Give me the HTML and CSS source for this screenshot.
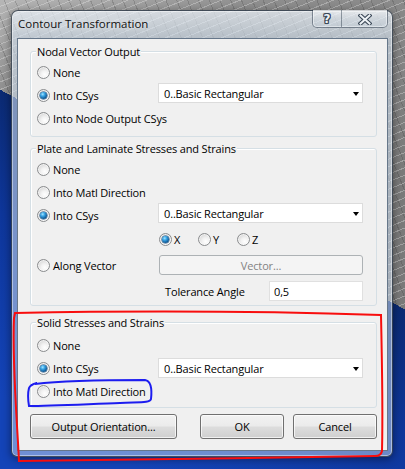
FILE: index.html
```html
<!DOCTYPE html>
<html>
<head>
<meta charset="utf-8">
<link rel="stylesheet" href="styles.css">
</head>
<body>
<div class="desktop">
  <div class="window">
    <div class="titlebar">
      <span class="title">Contour Transformation</span>
      <div class="caption-btns">
        <div class="cap help"><span class="q">?</span></div>
        <div class="cap close">
          <svg width="14" height="11" viewBox="0 0 14 11">
            <path d="M2.5 1.5 L11.5 9.5 M11.5 1.5 L2.5 9.5" stroke="#3b4857" stroke-width="4.2" stroke-linecap="square" fill="none"/>
            <path d="M2.5 1.5 L11.5 9.5 M11.5 1.5 L2.5 9.5" stroke="#eef2f6" stroke-width="2" stroke-linecap="square" fill="none"/>
          </svg>
        </div>
      </div>
    </div>
    <div class="client">
      <div class="group g1">
        <div class="group-head">Nodal Vector Output</div>
        <div class="row"><span class="opt"><i class="radio"></i>None</span></div>
        <div class="row"><span class="opt"><i class="radio on"></i>Into CSys</span><div class="combo lift"><span>0..Basic Rectangular</span><i class="arrow"></i></div></div>
        <div class="row"><span class="opt wide"><i class="radio"></i>Into Node Output CSys</span></div>
      </div>

      <div class="group g2">
        <div class="group-head">Plate and Laminate Stresses and Strains</div>
        <div class="row"><span class="opt"><i class="radio"></i>None</span></div>
        <div class="row"><span class="opt"><i class="radio"></i>Into Matl Direction</span></div>
        <div class="row"><span class="opt"><i class="radio on"></i>Into CSys</span><div class="combo lift"><span>0..Basic Rectangular</span><i class="arrow"></i></div></div>
        <div class="row xyz-row">
          <span class="opt"></span>
          <span class="xyz"><i class="radio on"></i>X</span>
          <span class="xyz"><i class="radio"></i>Y</span>
          <span class="xyz"><i class="radio"></i>Z</span>
        </div>
        <div class="row along-row"><span class="opt"><i class="radio"></i>Along Vector</span><div class="btn-disabled">Vector...</div></div>
        <div class="row tol-row"><span class="opt"></span><span class="tol-label">Tolerance Angle</span><div class="field">0,5</div></div>
      </div>

      <div class="group g3">
        <div class="group-head">Solid Stresses and Strains</div>
        <div class="row"><span class="opt"><i class="radio"></i>None</span></div>
        <div class="row"><span class="opt"><i class="radio on"></i>Into CSys</span><div class="combo drop"><span>0..Basic Rectangular</span><i class="arrow"></i></div></div>
        <div class="row"><span class="opt"><i class="radio"></i>Into Matl Direction</span></div>
      </div>

      <div class="buttons">
        <div class="btn orient">Output Orientation...</div>
        <div class="btn ok">OK</div>
        <div class="btn cancel">Cancel</div>
      </div>
    </div>
  </div>
  <svg class="marks" width="405" height="469" viewBox="0 0 405 469">
    <path d="M15 313 C120 311 260 311 381 315 C382 360 383 410 382 451 Q381 456 375 456 C260 458 120 460 19 461 C17 420 12 360 14 318 Z" fill="none" stroke="#f80d0d" stroke-width="2"/>
    <path d="M35 384 C60 381 110 380 145 380 C151 381 152 390 151 399 C150 403 140 402 120 403 C90 404 50 406 29 406 C28 400 28 392 29 388 C30 385 33 384 37 383" fill="none" stroke="#1d1df0" stroke-width="2"/>
  </svg>
</div>
</body>
</html>
```

FILE: styles.css
```css
* { box-sizing: border-box; }
html, body { margin: 0; padding: 0; }
body {
  font-family: "Open Sans", "Noto Sans", sans-serif;
  font-size: 11px;
  letter-spacing: -0.15px;
  color: #000;
}
.desktop {
  position: relative;
  width: 405px;
  height: 469px;
  overflow: hidden;
  padding: 10px 0 0 11px;
  background:
    linear-gradient(208.5deg, transparent 0, transparent 272px, #0b2a72 272px, #0e369a 380px, #1444b8 540px),
    repeating-linear-gradient(-22deg, transparent 0 6px, rgba(235,235,235,0.35) 6px 7px),
    repeating-linear-gradient(68deg, transparent 0 9px, rgba(50,50,50,0.22) 9px 10px),
    linear-gradient(160deg, #b6b6b6 0, #8e8e8e 90px, #7a7a7a 300px);
}
.window {
  width: 382px;
  height: 447px;
  border: 1px solid rgba(30, 40, 52, 0.75);
  border-radius: 7px 7px 6px 6px;
  background: linear-gradient(180deg, rgba(236,243,250,0.72) 0, rgba(210,224,238,0.6) 28px, rgba(200,218,240,0.5) 100%);
  box-shadow: 0 2px 8px rgba(0,0,0,0.45), inset 0 0 0 1px rgba(255,255,255,0.45);
  padding: 0 4px 5px 5px;
  display: flex;
  flex-direction: column;
}
.titlebar {
  height: 27px;
  display: flex;
  align-items: flex-start;
  flex: none;
}
.title {
  padding: 5px 0 0 1px;
  line-height: 16px;
  font-size: 11.5px;
  letter-spacing: 0;
  color: #111;
  text-shadow: 0 0 6px rgba(255,255,255,0.9);
}
.caption-btns {
  margin-left: auto;
  margin-top: -1px;
  width: 76px;
  height: 18px;
  display: flex;
  border: 1px solid rgba(40, 55, 72, 0.5);
  border-top: none;
  border-radius: 0 0 5px 5px;
  overflow: hidden;
  box-shadow: inset 0 0 0 1px rgba(255,255,255,0.55);
}
.cap {
  height: 100%;
  display: flex;
  align-items: center;
  justify-content: center;
  background: linear-gradient(180deg, rgba(255,255,255,0.45), rgba(230,238,246,0.2) 50%, rgba(200,214,228,0.25));
}
.help {
  width: 29px;
  border-right: 1px solid rgba(40, 55, 72, 0.45);
}
.close { flex: 1; padding-top: 1px; }
.q {
  font-family: "DejaVu Sans", sans-serif;
  font-weight: bold;
  font-size: 12px;
  line-height: 12px;
  color: #eef2f6;
  text-shadow: 1px 0 0 #3b4857, -1px 0 0 #3b4857, 0 1px 0 #3b4857, 0 -1px 0 #3b4857, 1px 1px 0 #3b4857, -1px -1px 0 #3b4857, 1px -1px 0 #3b4857, -1px 1px 0 #3b4857;
}
.client {
  flex: 1;
  border: 1px solid #66778a;
  background: #f0f0f0;
  padding: 12px 10px 0 12px;
}
.group {
  border: 1px solid #d5dfe5;
  border-radius: 3px;
  box-shadow: inset 1px 1px 0 #fff;
}
.group-head {
  width: fit-content;
  margin: -8px 0 0 5px;
  padding: 0 1px;
  line-height: 15px;
  background: #f0f0f0;
}
.g1 { padding-bottom: 6px; }
.g1 .group-head { margin-bottom: 2px; }
.g2 { margin-top: 11px; padding-bottom: 2px; }
.g2 .group-head { margin-bottom: 2px; }
.g3 { margin-top: 16px; padding-bottom: 4px; }
.g3 .group-head { margin-bottom: 4px; }

.row {
  height: 23px;
  display: flex;
  align-items: center;
}
.xyz-row { height: 24px; }
.along-row { height: 28px; }
.tol-row { height: 24px; }

.opt {
  flex: none;
  width: 127px;
  padding-left: 6px;
  display: flex;
  align-items: center;
  white-space: nowrap;
}
.radio {
  flex: none;
  width: 13px;
  height: 13px;
  margin-right: 3px;
  border-radius: 50%;
  border: 1px solid #8a8c8e;
  background: radial-gradient(circle at 62% 68%, #ffffff 0, #f2f2f2 35%, #d2d2d2 85%, #c4c4c4 100%);
  box-shadow: inset 0 0 0 1px rgba(255,255,255,0.6);
  display: flex;
  align-items: center;
  justify-content: center;
}
.radio.on::after {
  content: "";
  width: 7px;
  height: 7px;
  border-radius: 50%;
  background: radial-gradient(circle at 38% 32%, #a6e6ff 0, #3aa6e6 30%, #12609e 65%, #0d3a66 100%);
  box-shadow: 0 0 0 0.5px #1b4c7a;
}
.xyz {
  flex: none;
  width: 39px;
  padding-left: 1px;
  display: flex;
  align-items: center;
}
.xyz .radio { margin-right: 2px; }

.combo {
  flex: none;
  width: 205px;
  height: 20px;
  background: #fff;
  border: 1px solid #dcdcdc;
  padding: 0 3px 0 5px;
  display: flex;
  align-items: center;
  justify-content: space-between;
}
.combo.lift { align-self: flex-start; margin-top: -1px; }
.combo.drop { align-self: flex-start; margin-top: 1px; }
.arrow {
  width: 0;
  height: 0;
  border-top: 4px solid #000;
  border-left: 3.5px solid transparent;
  border-right: 3.5px solid transparent;
  margin-top: 1px;
}
.btn-disabled {
  flex: none;
  width: 204px;
  height: 20px;
  margin-left: 1px;
  border: 1px solid #adb2b5;
  border-radius: 3px;
  background: #f4f4f4;
  color: #838383;
  display: flex;
  align-items: center;
  justify-content: center;
}
.tol-label {
  flex: none;
  width: 111px;
  padding-left: 7px;
}
.field {
  flex: none;
  width: 94px;
  height: 20px;
  background: #fff;
  border: 1px solid #e0e0e0;
  padding-left: 4px;
  display: flex;
  align-items: center;
}
.buttons {
  margin-top: 6px;
  display: flex;
}
.btn {
  height: 25px;
  border: 1px solid #707070;
  border-radius: 3px;
  background: linear-gradient(180deg, #f2f2f2 0, #ebebeb 48%, #dddddd 52%, #cfcfcf 100%);
  box-shadow: inset 0 0 0 1px rgba(255,255,255,0.7);
  display: flex;
  align-items: center;
  justify-content: center;
}
.orient { width: 147px; }
.ok { width: 84px; margin-left: auto; }
.cancel { width: 84px; margin-left: 9px; }

.marks {
  position: absolute;
  left: 0;
  top: 0;
  pointer-events: none;
}
```
